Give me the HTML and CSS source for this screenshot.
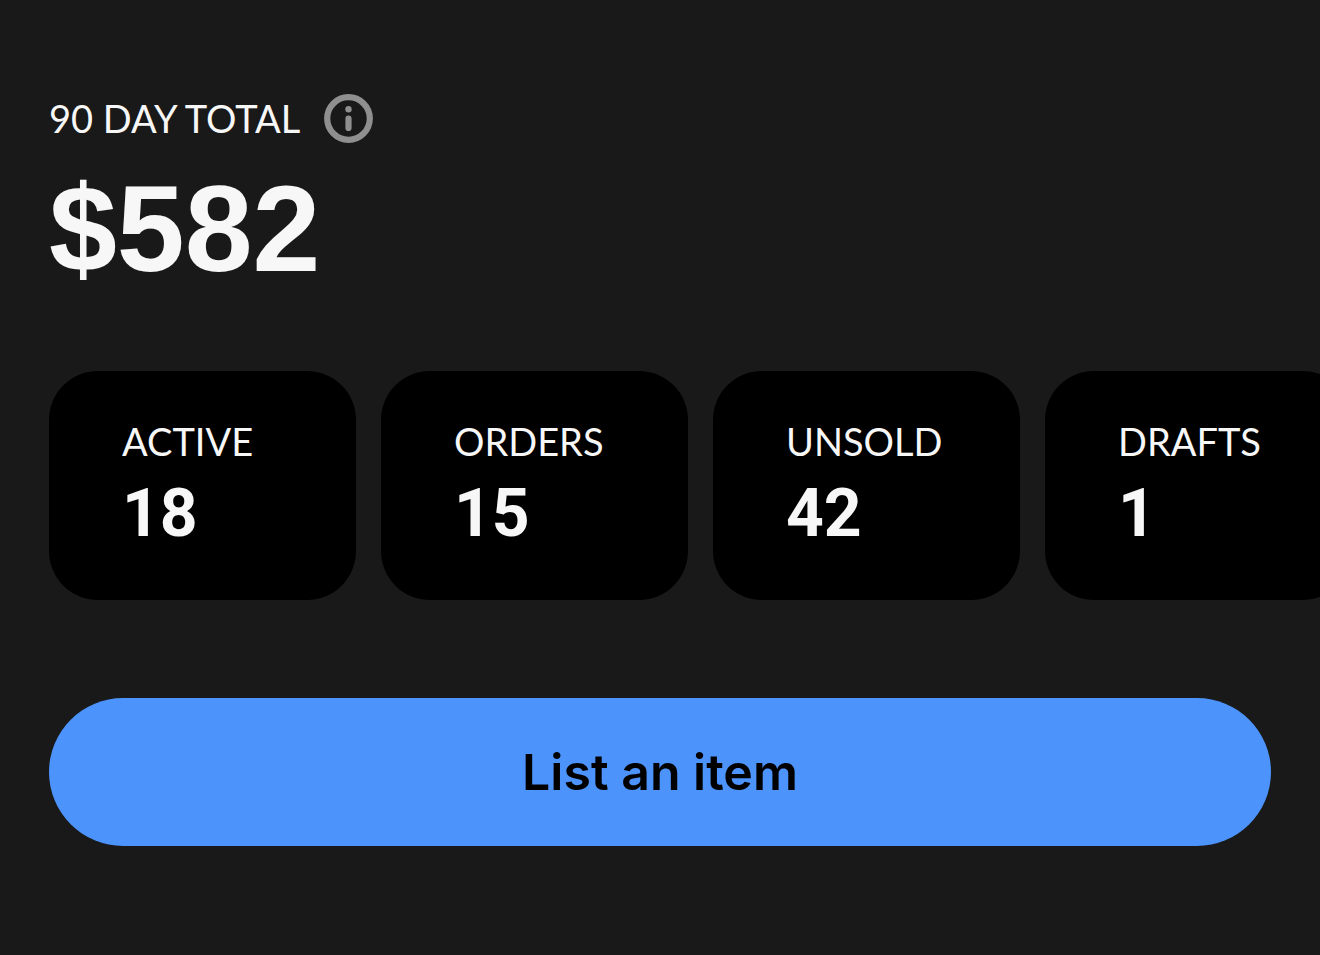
FILE: index.html
```html
<!DOCTYPE html>
<html lang="en">
<head>
    <meta charset="UTF-8">
    <meta name="viewport" content="width=device-width, initial-scale=1.0">
    <title>Selling</title>
    <link rel="stylesheet" href="styles.css">
</head>
<body>
    <main class="selling">
        <section class="total">
            <div class="total-header">
                <h1 class="total-label">90 DAY TOTAL</h1>
                <button class="info-button" type="button" aria-label="About this total">
                    <svg class="info-icon" viewBox="0 0 49 49" aria-hidden="true">
                        <circle cx="24.5" cy="24.5" r="21.3" fill="none" stroke="currentColor" stroke-width="6.2"/>
                        <circle cx="24.5" cy="15.3" r="3.2" fill="currentColor"/>
                        <path d="M24.5 24.7V33.9" fill="none" stroke="currentColor" stroke-width="6.2" stroke-linecap="round"/>
                    </svg>
                </button>
            </div>
            <p class="total-amount">$582</p>
        </section>

        <nav class="stats">
            <a class="stat-card" href="#active">
                <span class="stat-label">ACTIVE</span>
                <span class="stat-value">18</span>
            </a>
            <a class="stat-card" href="#orders">
                <span class="stat-label">ORDERS</span>
                <span class="stat-value">15</span>
            </a>
            <a class="stat-card" href="#unsold">
                <span class="stat-label">UNSOLD</span>
                <span class="stat-value">42</span>
            </a>
            <a class="stat-card" href="#drafts">
                <span class="stat-label">DRAFTS</span>
                <span class="stat-value">1</span>
            </a>
        </nav>

        <button class="list-button" type="button">List an item</button>
    </main>
</body>
</html>
```
FILE: styles.css
```css
* {
    box-sizing: border-box;
}

body {
    margin: 0;
    background-color: #191919;
    color: #f7f7f7;
    font-family: Lato, "Liberation Sans", sans-serif;
}

.selling {
    padding: 94px 49px;
}

/* 90 day total */
.total-header {
    display: flex;
    align-items: center;
    gap: 24px;
}

.total-label {
    margin: 0;
    font-size: 38px;
    font-weight: 400;
    line-height: 49px;
}

.info-button {
    padding: 0;
    border: none;
    background: none;
    color: #8f8f8f;
    cursor: pointer;
}

.info-icon {
    display: block;
    width: 49px;
    height: 49px;
}

.total-amount {
    margin: 18px 0 0;
    font-family: "Liberation Sans", sans-serif;
    font-size: 122px;
    font-weight: 700;
    line-height: 136px;
}

/* Cards scroll sideways past the edge of the screen */
.stats {
    display: flex;
    gap: 25px;
    margin: 74px -49px 0;
    padding: 0 49px;
    overflow-x: auto;
    scrollbar-width: none;
}

.stat-card {
    display: flex;
    flex: none;
    flex-direction: column;
    width: 307px;
    padding: 46px 73px 38px;
    border-radius: 49px;
    background-color: #000;
    color: inherit;
    text-decoration: none;
}

.stat-label {
    font-size: 38px;
    line-height: 49px;
}

.stat-value {
    font-family: Roboto, "Liberation Sans", sans-serif;
    font-size: 66px;
    font-weight: 700;
    line-height: 96px;
}

.list-button {
    display: block;
    width: 100%;
    margin-top: 98px;
    padding: 44px;
    border: none;
    border-radius: 74px;
    background-color: #4d93fc;
    color: #000;
    font-family: Inter, "Liberation Sans", sans-serif;
    font-size: 50px;
    font-weight: 600;
    line-height: 60px;
    cursor: pointer;
}
```
